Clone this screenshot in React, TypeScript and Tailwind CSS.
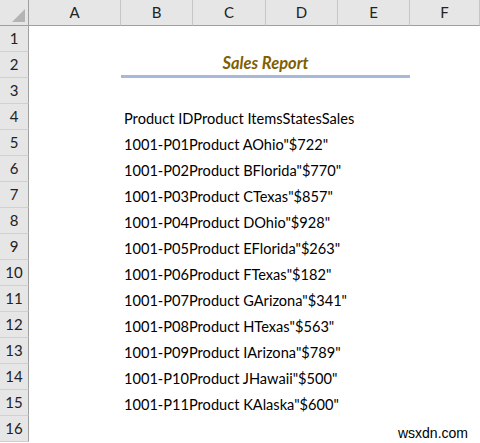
import React from 'react';

const columns = ['A', 'B', 'C', 'D', 'E', 'F'];

const rows: { id: string; item: string; state: string; sales: string }[] = [
  { id: '1001-P01', item: 'Product A', state: 'Ohio', sales: '"$722"' },
  { id: '1001-P02', item: 'Product B', state: 'Florida', sales: '"$770"' },
  { id: '1001-P03', item: 'Product C', state: 'Texas', sales: '"$857"' },
  { id: '1001-P04', item: 'Product D', state: 'Ohio', sales: '"$928"' },
  { id: '1001-P05', item: 'Product E', state: 'Florida', sales: '"$263"' },
  { id: '1001-P06', item: 'Product F', state: 'Texas', sales: '"$182"' },
  { id: '1001-P07', item: 'Product G', state: 'Arizona', sales: '"$341"' },
  { id: '1001-P08', item: 'Product H', state: 'Texas', sales: '"$563"' },
  { id: '1001-P09', item: 'Product I', state: 'Arizona', sales: '"$789"' },
  { id: '1001-P10', item: 'Product J', state: 'Hawaii', sales: '"$500"' },
  { id: '1001-P11', item: 'Product K', state: 'Alaska', sales: '"$600"' },
];

const RowHead = ({ n }: { n: number }) => (
  <div className="flex h-[26px] items-center justify-center border-r border-b border-r-[#9f9f9f] border-b-[#d0d0d0] bg-[#e6e6e6] text-[15px] text-[#222]">
    {n}
  </div>
);

export default function App() {
  // body lines: row 1..16, with the title on row 2 and the data from row 4
  const body: React.ReactNode[] = [];
  for (let r = 1; r <= 16; r++) {
    let content: React.ReactNode = <div className="col-span-5 h-[26px]" />;
    if (r === 2) {
      content = (
        <>
          <div className="col-span-4 flex h-[26px] items-end justify-center border-b-[3px] border-[#a7b8da] pb-[4px]">
            <span className="text-[16.5px] font-bold italic leading-none text-[#7f6000]">Sales Report</span>
          </div>
          <div className="h-[26px]" />
        </>
      );
    } else if (r === 4) {
      content = <div className="col-span-5 flex h-[26px] items-end whitespace-nowrap pb-[3px] pl-[3px]">Product IDProduct ItemsStatesSales</div>;
    } else if (r >= 5 && r <= 15) {
      const d = rows[r - 5];
      content = (
        <div className="col-span-5 flex h-[26px] items-end whitespace-nowrap pb-[3px] pl-[3px]">
          {d.id}
          {d.item}
          {d.state}
          {d.sales}
        </div>
      );
    }
    body.push(
      <React.Fragment key={r}>
        <RowHead n={r} />
        <div className="h-[26px]" />
        {content}
      </React.Fragment>
    );
  }

  return (
    <div className="relative h-[443px] w-[480px] overflow-hidden bg-white text-[14.6px] leading-none text-black" style={{ fontFamily: 'Lato, "Open Sans", sans-serif' }}>
      <div className="grid grid-cols-[29px_92px_72px_73px_72px_72px_1fr]">
        {/* corner + column letters */}
        <div className="relative h-[26px] border-r border-b border-[#9f9f9f] bg-[#e6e6e6]">
          <div className="absolute right-[3px] bottom-[3px] h-0 w-0 border-b-[13px] border-l-[13px] border-b-[#b4b4b4] border-l-transparent" />
        </div>
        {columns.map((c) => (
          <div key={c} className="flex h-[26px] items-center justify-center border-r border-b border-r-[#c6c6c6] border-b-[#9f9f9f] bg-[#e6e6e6] text-[15px] text-[#222]">
            {c}
          </div>
        ))}
        {body}
      </div>
      <span className="absolute right-[12px] bottom-[3px] text-[14px] text-black" style={{ fontFamily: '"Liberation Sans", sans-serif' }}>
        wsxdn.com
      </span>
    </div>
  );
}
